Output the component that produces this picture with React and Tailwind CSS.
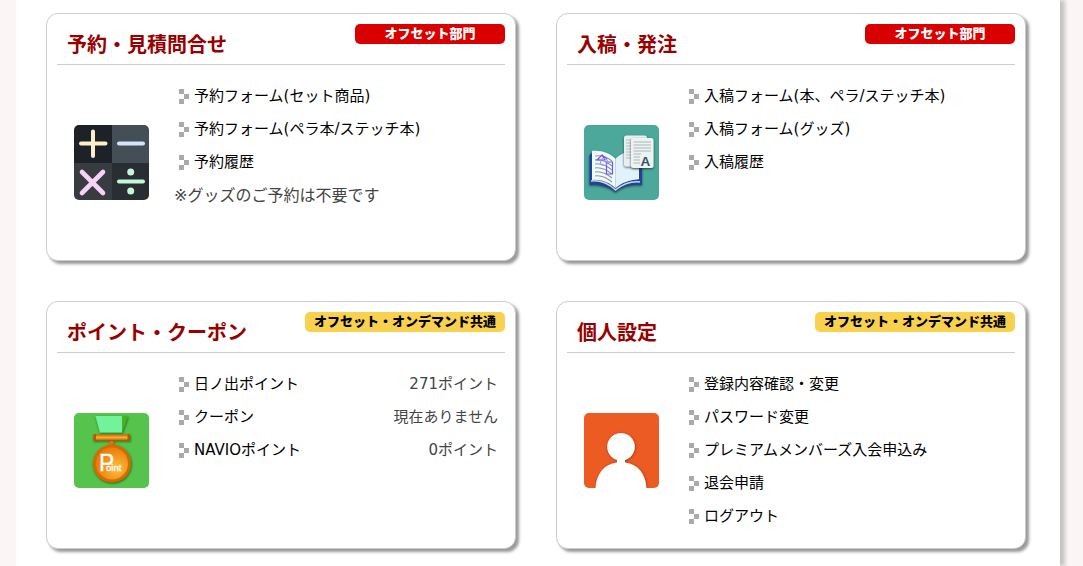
import React from "react";

function CalculatorIcon() {
  return (
    <svg viewBox="0 0 75 75" className="h-full w-full" aria-hidden="true">
      <rect width="38" height="38" fill="#1d2228" />
      <rect x="38" width="37" height="38" fill="#434e57" />
      <rect y="38" width="38" height="37" fill="#373c41" />
      <rect x="38" y="38" width="37" height="37" fill="#292e33" />
      <g fill="none" strokeLinecap="round" strokeWidth="4">
        <path d="M19 6.5V31M7 18.5H31.5" stroke="#fbefca" />
        <path d="M45 18.5H69" stroke="#d4e5fb" />
        <path d="M8 47L29 68M29 47L8 68" stroke="#f8d2f6" strokeWidth="4.6" />
        <path d="M45 56.5H69" stroke="#c4f7da" />
      </g>
      <g fill="#c4f7da">
        <circle cx="56.700" cy="47" r="3.500" />
        <circle cx="56.700" cy="66" r="3.500" />
      </g>
    </svg>
  );
}

function ManuscriptIcon() {
  return (
    <svg viewBox="0 0 75 75" className="h-full w-full" aria-hidden="true">
      <defs>
        <filter id="bookShadow" x="-20%" y="-20%" width="140%" height="140%">
          <feDropShadow dx="0" dy="1" stdDeviation="1.300" floodColor="#12302c" floodOpacity="0.8" />
        </filter>
      </defs>
      <rect width="75" height="75" fill="#4ba89b" />
      <g filter="url(#bookShadow)">
        <path d="M5.500 30L8 28V55C17 55 25 58 31.500 64C38 58 46 55 55 55V28L58 30V60C48 59 38 61 31.500 67C24 61 15 59 5.500 60Z" fill="#233f9c" />
        <path d="M7 56C17 55 25 59 31.500 65C39 59 47 56 56 57" fill="none" stroke="#c5d8e8" strokeWidth="1.500" />
        <path d="M8 26C17 25 26 28 31.500 34V63C25 57 17 54 8 55Z" fill="#f1fafb" />
        <path d="M31.500 34C37 28 46 25 55 26V54C46 55 38 57 31.500 63Z" fill="#e2f2fb" />
      </g>
      <path d="M31.500 34V62" stroke="#c1d8e2" strokeWidth="1" />
      <g fill="none" stroke="#8a979f" strokeWidth="1.100">
        <path d="M11 31C17 30 23 32 28 36M11 35C17 34 23 37 28 41M11 39C17 38 23 41 28 45M11 43C17 42 23 45 28 49M11 47C17 46 23 49 28 53M11 51C17 50 23 53 28 57" />
      </g>
      <path d="M22.500 37H28.500V49H22.500ZM13 35L18 30L21 35ZM18 30L23 34" fill="none" stroke="#7256ed" strokeWidth="1.200" />
      <circle cx="20" cy="37" r="3.500" fill="none" stroke="#a697f3" strokeWidth="1.200" />
      <g filter="url(#bookShadow)">
        <rect x="40" y="10.500" width="23" height="31" rx="2.500" fill="#e9eeef" />
        <path d="M42 15H60M42 18H60M42 21H60M42 24H60M42 27H60M42 30H60M42 33H60" stroke="#b0b8ba" strokeWidth="0.900" />
      </g>
      <g filter="url(#bookShadow)">
        <rect x="47" y="13" width="22.500" height="30" rx="2.500" fill="#edf2f2" />
        <path d="M49.500 17H67M49.500 20H67M49.500 23H67M49.500 26H67M49.500 29H57M49.500 32H56M49.500 35H56M49.500 38H56" stroke="#a5afb1" strokeWidth="0.900" />
      </g>
      <text x="56.500" y="40.500" fontFamily="Liberation Sans, sans-serif" fontSize="13.500" fontWeight="bold" fill="#355267">A</text>
    </svg>
  );
}

function MedalIcon() {
  return (
    <svg viewBox="0 0 75 75" className="h-full w-full" aria-hidden="true">
      <defs>
        <radialGradient id="medalFace" cx="65%" cy="65%" r="65%">
          <stop offset="0" stopColor="#ffbd3b" />
          <stop offset="1" stopColor="#e97c0b" />
        </radialGradient>
        <linearGradient id="medalBar" x1="0" y1="0" x2="0" y2="1">
          <stop offset="0" stopColor="#cf6504" />
          <stop offset="0.500" stopColor="#ffad2b" />
          <stop offset="1" stopColor="#c85a00" />
        </linearGradient>
        <filter id="medalShadow" x="-20%" y="-20%" width="140%" height="140%">
          <feDropShadow dx="0.500" dy="1" stdDeviation="1.200" floodColor="#143a10" floodOpacity="0.750" />
        </filter>
      </defs>
      <rect width="75" height="75" fill="#56c34c" />
      <g filter="url(#medalShadow)">
        <path d="M46 3H54L48 19.500H44Z" fill="#47b321" />
        <path d="M21.500 3H48L48 19.500H26Z" fill="#72f39b" />
      </g>
      <g filter="url(#medalShadow)">
        <circle cx="37.500" cy="30" r="2.300" fill="#dc730c" />
        <circle cx="38" cy="50.500" r="19" fill="#d66905" />
        <circle cx="38" cy="50.500" r="16" fill="url(#medalFace)" />
        <rect x="20" y="21.500" width="36" height="6" fill="url(#medalBar)" />
        <rect x="19.500" y="21" width="2.500" height="7" rx="1" fill="#bd5704" />
        <rect x="53.500" y="21" width="2.500" height="7" rx="1" fill="#bd5704" />
      </g>
      <text x="25" y="57.500" fill="#ffffff" stroke="#ffffff" strokeWidth="0.300" fontFamily="Liberation Sans, sans-serif" fontSize="23">
        P
        <tspan x="32" fontSize="9.500">oint</tspan>
      </text>
    </svg>
  );
}

function PersonIcon() {
  return (
    <svg viewBox="0 0 75 75" className="h-full w-full" aria-hidden="true">
      <defs>
        <filter id="personShadow" x="-20%" y="-20%" width="140%" height="140%">
          <feDropShadow dx="0.500" dy="0.500" stdDeviation="1.300" floodColor="#732407" floodOpacity="0.750" />
        </filter>
      </defs>
      <rect width="75" height="75" fill="#ec5b22" />
      <g filter="url(#personShadow)">
        <path
          d="M11.500 76C12 61 20 51 33 49.500V47A13.800 13.800 0 1 1 41 47V49.500C54 51 62 61 62.500 76Z"
          fill="#ffffff"
        />
      </g>
    </svg>
  );
}

function Marker() {
  return (
    <svg viewBox="0 0 10 15" className="h-[15px] w-[10px] shrink-0" aria-hidden="true" shapeRendering="crispEdges">
      <path d="M0 0H5V5H0ZM5 5H10V10H5ZM0 10H5V15H0Z" fill="#aaaaaa" />
    </svg>
  );
}

const sections = [
  {
    title: "予約・見積問合せ",
    scope: "offset",
    Icon: CalculatorIcon,
    items: [
      { label: "予約フォーム(セット商品)" },
      { label: "予約フォーム(ペラ本/ステッチ本)" },
      { label: "予約履歴" },
    ],
    note: "※グッズのご予約は不要です",
  },
  {
    title: "入稿・発注",
    scope: "offset",
    Icon: ManuscriptIcon,
    items: [
      { label: "入稿フォーム(本、ペラ/ステッチ本)" },
      { label: "入稿フォーム(グッズ)" },
      { label: "入稿履歴" },
    ],
  },
  {
    title: "ポイント・クーポン",
    scope: "common",
    Icon: MedalIcon,
    items: [
      { label: "日ノ出ポイント", value: "271ポイント" },
      { label: "クーポン", value: "現在ありません" },
      { label: "NAVIOポイント", value: "0ポイント" },
    ],
  },
  {
    title: "個人設定",
    scope: "common",
    Icon: PersonIcon,
    items: [
      { label: "登録内容確認・変更" },
      { label: "パスワード変更" },
      { label: "プレミアムメンバーズ入会申込み" },
      { label: "退会申請" },
      { label: "ログアウト" },
    ],
  },
];

function ScopeBadge({ scope }) {
  return scope === "offset" ? (
    <span className="w-[150px] shrink-0 rounded-[5px] bg-[#d90000] text-center text-[13px] leading-5 font-black text-white">
      オフセット部門
    </span>
  ) : (
    <span className="w-[200px] shrink-0 rounded-[5px] bg-[#f8d24e] text-center text-[13px] leading-5 font-black text-black">
      オフセット・オンデマンド共通
    </span>
  );
}

function Card({ title, scope, Icon, items, note }) {
  return (
    <section className="rounded-xl border border-[#cccccc] bg-white px-[10px] pt-[10px] pb-[15px] shadow-[3px_3px_3px_#999999]">
      <header className="flex items-start justify-between border-b border-[#cccccc]">
        <h2 className="pt-[2px] pl-[10px] text-[20px] leading-[38px] font-bold text-[#990000]">{title}</h2>
        <ScopeBadge scope={scope} />
      </header>
      <div className="mt-[15px] flex min-h-[165px] items-center gap-[25px] pl-[17px]">
        <div className="h-[75px] w-[75px] shrink-0 overflow-hidden rounded-[5px]">
          <Icon />
        </div>
        <div className="flex-1 self-stretch pr-[7px] text-[15px] leading-[33px]">
          <ul className="pl-[5px]">
            {items.map(({ label, value }) => (
              <li key={label} className="flex items-center justify-between">
                <a href="#" className="flex items-center gap-[5px] text-black">
                  <Marker />
                  {label}
                </a>
                {value && <span className="text-[#444444]">{value}</span>}
              </li>
            ))}
          </ul>
          {note && <p className="text-[16px] text-[#444444]">{note}</p>}
        </div>
      </div>
    </section>
  );
}

export default function App() {
  return (
    <div className="min-h-screen overflow-hidden bg-[#fcf5f5] pr-[23px] pl-4 font-['DejaVu_Sans','Noto_Sans_CJK_JP',sans-serif]" lang="ja">
      <main className="grid min-h-screen grid-cols-2 content-start gap-10 bg-white pt-[13px] pr-[34px] pb-[17px] pl-[30px] shadow-[5px_0_4px_#c4c4c4]">
        {sections.map((section) => (
          <Card key={section.title} {...section} />
        ))}
      </main>
    </div>
  );
}
